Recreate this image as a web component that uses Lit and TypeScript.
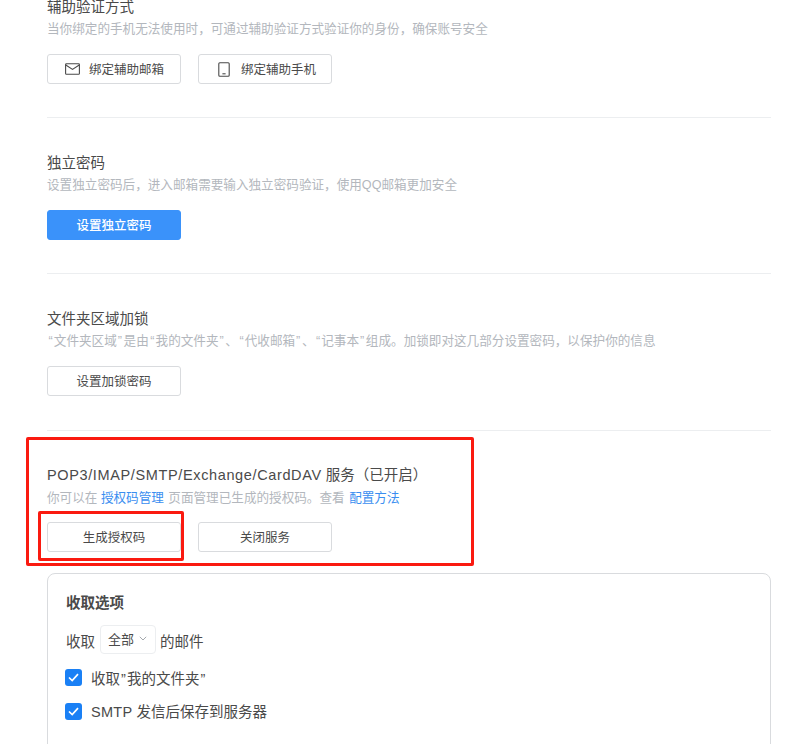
import { LitElement, html, css } from "lit";
import { customElement } from "lit/decorators.js";

@customElement("app-root")
export class AppRoot extends LitElement {
  static styles = css`
    :host {
      display: block;
      position: relative;
      height: 744px;
      overflow: hidden;
      background: #fff;
      font-family: "Liberation Sans", "Noto Sans CJK SC", sans-serif;
      color: #4a4a4a;
    }
    .page {
      margin-top: -5px;
      padding: 0 35px 0 47px;
    }
    .section {
      padding-bottom: 33px;
      margin-bottom: 33px;
      border-bottom: 1px solid #eceef0;
    }
    .section.s3 {
      padding-bottom: 34px;
    }
    .section.last {
      border-bottom: none;
      padding-bottom: 0;
      margin-bottom: 21px;
    }
    .title {
      padding-top: 1px;
      font-size: 14.5px;
      line-height: 22px;
      color: #4a4a4a;
    }
    .section.last .title {
      padding-top: 0;
    }
    .latin {
      letter-spacing: 0.63px;
    }
    .desc {
      font-size: 12.6px;
      line-height: 22px;
      color: #b3b7bd;
      white-space: nowrap;
    }
    .desc a {
      color: #3a8ef0;
      text-decoration: none;
    }
    .desc a.first {
      margin-right: 1px;
    }
    .desc a.second {
      margin-left: 1px;
    }
    .qo {
      margin-left: 1.6px;
      margin-right: 1px;
    }
    .qc {
      margin-left: 1px;
      margin-right: 1.6px;
    }
    .actions {
      display: flex;
      gap: 17px;
      margin-top: 14px;
    }
    .section.last .desc {
      padding-top: 1px;
    }
    .section.last .actions {
      margin-top: 13px;
    }
    .btn {
      box-sizing: border-box;
      width: 134px;
      height: 30px;
      padding-bottom: 2px;
      display: flex;
      align-items: center;
      justify-content: center;
      gap: 7px;
      background: #fff;
      border: 1px solid #d9dbde;
      border-radius: 3px;
      font-size: 12.5px;
      color: #4a4a4a;
    }
    .btn.primary {
      background: #3a92fa;
      border-color: #3a92fa;
      color: #fff;
      font-weight: 500;
    }
    .slot {
      display: flex;
      justify-content: center;
      flex: none;
      padding-top: 2px;
    }
    .slot.mail {
      width: 18px;
    }
    .slot.phone {
      width: 20px;
    }
    .slot svg {
      display: block;
    }
    .card {
      box-sizing: border-box;
      height: 300px;
      padding: 18px 18px;
      border: 1px solid #d9dbde;
      border-radius: 8px;
    }
    .card-title {
      font-size: 14.5px;
      line-height: 22px;
      font-weight: 700;
      color: #4a4a4a;
    }
    .row {
      display: flex;
      align-items: center;
      gap: 4.5px;
      margin-top: 11px;
      font-size: 14.5px;
      height: 28px;
    }
    .row .txt {
      padding-top: 3px;
    }
    .select {
      box-sizing: border-box;
      width: 56px;
      height: 29px;
      display: flex;
      align-items: center;
      justify-content: center;
      gap: 5px;
      border: 1px solid #eceef0;
      border-radius: 4px;
      font-size: 13px;
      padding-bottom: 1px;
    }
    .rows {
      display: flex;
      flex-direction: column;
      margin-top: 3px;
      margin-left: -1px;
    }
    .check {
      display: flex;
      align-items: center;
      gap: 9px;
      font-size: 14.5px;
      line-height: 22px;
      margin-top: 9.5px;
    }
    .check .txt {
      padding-top: 2px;
    }
    .check .q {
      margin-left: 1px;
      margin-right: 1.2px;
    }
    .check .smtp {
      letter-spacing: 0.3px;
    }
    .box {
      width: 17px;
      height: 17px;
      border-radius: 3px;
      background: #1a80f5;
      display: flex;
      align-items: center;
      justify-content: center;
      flex: none;
    }
    .overlay {
      position: absolute;
      box-sizing: border-box;
      border: 3px solid #fa1a10;
      border-radius: 2px;
      pointer-events: none;
    }
    .o1 {
      left: 26px;
      top: 437px;
      width: 448px;
      height: 129px;
    }
    .o2 {
      left: 38px;
      top: 511px;
      width: 146px;
      height: 50px;
    }
  `;

  render() {
    const tick = html`
      <span class="box">
        <svg width="11" height="9" viewBox="0 0 11 9" fill="none" stroke="#fff" stroke-width="1.7">
          <path d="M1 4.5 L4.2 7.5 L10 1.2"></path>
        </svg>
      </span>
    `;
    return html`
      <div class="page">
        <section class="section">
          <div class="title">辅助验证方式</div>
          <div class="desc">当你绑定的手机无法使用时，可通过辅助验证方式验证你的身份，确保账号安全</div>
          <div class="actions">
            <div class="btn">
              <span class="slot mail">
                <svg width="15" height="12" viewBox="0 0 15 12" fill="none" stroke="#4a4a4a" stroke-width="1.1">
                  <rect x="0.6" y="0.8" width="13.8" height="10.4" rx="0.8"></rect>
                  <path d="M0.8 2 L7.5 6.4 L14.2 2"></path>
                </svg>
              </span>
              <span>绑定辅助邮箱</span>
            </div>
            <div class="btn">
              <span class="slot phone">
                <svg width="12" height="15" viewBox="0 0 12 15" fill="none" stroke="#4a4a4a" stroke-width="1.1">
                  <rect x="0.8" y="0.8" width="10.4" height="13.4" rx="1"></rect>
                  <path d="M4.4 11.8 H7.6"></path>
                </svg>
              </span>
              <span>绑定辅助手机</span>
            </div>
          </div>
        </section>

        <section class="section">
          <div class="title">独立密码</div>
          <div class="desc">设置独立密码后，进入邮箱需要输入独立密码验证，使用QQ邮箱更加安全</div>
          <div class="actions">
            <div class="btn primary"><span>设置独立密码</span></div>
          </div>
        </section>

        <section class="section s3">
          <div class="title">文件夹区域加锁</div>
          <div class="desc"><span class="qo">“</span>文件夹区域<span class="qc">”</span>是由<span class="qo">“</span>我的文件夹<span class="qc">”</span>、<span class="qo">“</span>代收邮箱<span class="qc">”</span>、<span class="qo">“</span>记事本<span class="qc">”</span>组成。加锁即对这几部分设置密码，以保护你的信息</div>
          <div class="actions">
            <div class="btn"><span>设置加锁密码</span></div>
          </div>
        </section>

        <section class="section last">
          <div class="title"><span class="latin">POP3/IMAP/SMTP/Exchange/CardDAV</span> 服务（已开启）</div>
          <div class="desc">你可以在 <a class="first">授权码管理</a> 页面管理已生成的授权码。查看 <a class="second">配置方法</a></div>
          <div class="actions">
            <div class="btn"><span>生成授权码</span></div>
            <div class="btn"><span>关闭服务</span></div>
          </div>
        </section>

        <div class="card">
          <div class="card-title">收取选项</div>
          <div class="row">
            <span class="txt">收取</span>
            <div class="select">
              <span>全部</span>
              <svg width="8" height="5" viewBox="0 0 8 5" fill="none" stroke="#9a9ea4" stroke-width="0.9">
                <path d="M0.8 0.8 L4 4 L7.2 0.8"></path>
              </svg>
            </div>
            <span class="txt">的邮件</span>
          </div>
          <div class="rows">
            <label class="check">
              ${tick}
              <span class="txt">收取<span class="q">”</span>我的文件夹<span class="q">”</span></span>
            </label>
            <label class="check">
              ${tick}
              <span class="txt"><span class="smtp">SMTP</span> 发信后保存到服务器</span>
            </label>
          </div>
        </div>
      </div>
      <div class="overlay o1"></div>
      <div class="overlay o2"></div>
    `;
  }
}
